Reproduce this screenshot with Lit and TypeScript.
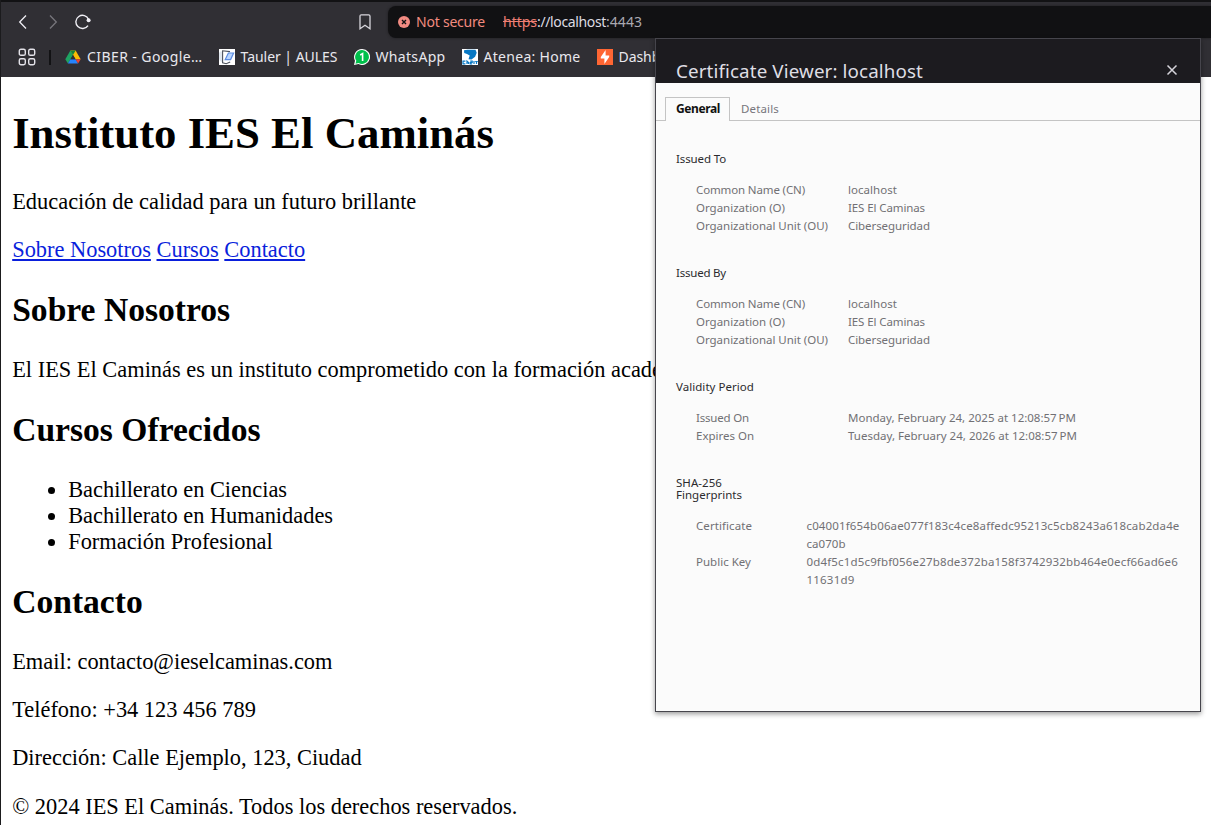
import { LitElement, html, css, svg } from "lit";
import { customElement, property } from "lit/decorators.js";

/** A run of UI text whose tracking is adjusted to fill a given measure. */
@customElement("fit-text")
class FitText extends LitElement {
  @property({ type: Number }) w = 0;
  @property({ type: Boolean, reflect: true }) struck = false;
  static styles = css`
    :host { display: inline-block; white-space: pre; }
    .run { display: inline-block; white-space: pre; }
    :host([struck]) .run { text-decoration: line-through; }
  `;
  render() {
    return html`<span class="run"><slot></slot></span>`;
  }
  firstUpdated() {
    const run = this.renderRoot.querySelector(".run") as HTMLElement;
    const fit = () => {
      run.style.letterSpacing = "0px";
      const n = (this.textContent || "").length;
      const natural = run.getBoundingClientRect().width;
      if (this.w && n) run.style.letterSpacing = `${(this.w - natural) / n}px`;
    };
    fit();
    document.fonts.ready.then(fit);
  }
}

const t = (text: string, w: number, struck = false) => html`<fit-text .w=${w} .struck=${struck}>${text}</fit-text>`;

type Row = [string, number, string, number];
type Section = { title: string; w: number; rows: Row[] };

const subject: Row[] = [
  ["Common Name (CN)", 109, "localhost", 49],
  ["Organization (O)", 89, "IES El Caminas", 77],
  ["Organizational Unit (OU)", 132, "Ciberseguridad", 82],
];
const sections: Section[] = [
  { title: "Issued To", w: 50, rows: subject },
  { title: "Issued By", w: 50, rows: subject },
  {
    title: "Validity Period", w: 78,
    rows: [
      ["Issued On", 53, "Monday, February 24, 2025 at 12:08:57\u202fPM", 228],
      ["Expires On", 58, "Tuesday, February 24, 2026 at 12:08:57\u202fPM", 229],
    ],
  },
];
const prints: [string, number, [string, number][]][] = [
  ["Certificate", 56, [["c04001f654b06ae077f183c4ce8affedc95213c5cb8243a618cab2da4e", 373], ["ca070b", 39]]],
  ["Public Key", 55, [["0d4f5c1d5c9fbf056e27b8de372ba158f3742932bb464e0ecf66ad6e6", 371.5], ["11631d9", 48]]],
];

const drive = svg`<svg width="16" height="16" viewBox="0 0 16 16">
  <path d="M5.4 1.5 8 6 2.9 14.6.3 10.2z" fill="#1ea362"/>
  <path d="M10.6 1.5 15.7 10.2H10.5L5.4 1.5z" fill="#fbbc04"/><path d="M5.4 1.5h5.2L8 6z" fill="#14843b"/>
  <path d="M5.4 10.2h5.2l2.5 4.4H2.9z" fill="#2684fc"/><path d="M10.5 10.2h5.2l-2.6 4.4z" fill="#ea4335"/>
  <path d="M8 6l2.5 4.2H5.5z" fill="#302f34"/></svg>`;
const tauler = svg`<svg width="16" height="16" viewBox="0 0 16 16"><path fill="#fff" d="M0 0h16v16H0z"/>
  <path d="M0 4q2-3 3-1v10q-2 0-3-3z" fill="#dfe6ee"/>
  <path d="M11 2.6 3.6 1.8v12l3.6.9 4-1.6" fill="none" stroke="#4c515c" stroke-width="1.1"/>
  <path d="M9.4 4h5.2l-3 6.6H6.2z" fill="#b9d5ff" stroke="#5b8be0" stroke-width="1.2"/></svg>`;
const whats = svg`<svg width="16" height="16" viewBox="0 0 16 16"><path d="M8 0a8 8 0 1 1-3.6 15.1L0 16l1-4.2A8 8 0 0 1 8 0z" fill="#fff"/>
  <path d="M8 1.1A6.9 6.9 0 1 1 4.6 14l-3.1.7.8-2.9A6.9 6.9 0 0 1 8 1.1z" fill="#00c04b"/><path d="M6.2 6 8.6 4.6V12" fill="none" stroke="#fff" stroke-width="1.6"/></svg>`;
const atenea = svg`<svg width="16" height="16" viewBox="0 0 16 16"><path fill="#fff" d="M0 0h16v16H0z"/>
  <path d="M2 1.2 5.5.8h8l1.2 3-1.6 4-3.6 2.8-3-.3 1.2-3.8L5 5 2.2 4z" fill="#0878c4"/>
  <path d="M3.4 12.2H1v2.6h2.4M5 15v-2.8l1.5 1.4V15M8.2 12.2h2v1.3h-2v1.3h2M12 12v3M13.2 12.5h2.6M14.5 12v3" fill="none" stroke="#0878c4" stroke-width="1.2"/></svg>`;
const burp = svg`<svg width="16" height="16" viewBox="0 0 16 16"><path fill="#ff6633" d="M0 0h16v16H0z"/>
  <path d="M8.6 1v5.4h3.6V8L7.4 15V9.6H3.8V8z" fill="#fff"/></svg>`;

@customElement("app-root")
class AppRoot extends LitElement {
  static styles = css`
    :host { display: block; width: 1211px; height: 825px; overflow: hidden; position: relative; background: #fff; }
    * { box-sizing: border-box; }
    svg { display: block; flex: none; }
    .window { height: 825px; border-left: 1px solid #1b1b1d; overflow: hidden; }
    .chrome { height: 77px; border-top: 2px solid #121214; background: #302f34; color: #e9e8ee; font-family: "Noto Sans", sans-serif; font-size: 14px; }
    .nav { display: flex; height: 36px; align-items: stretch; }
    .tools { display: flex; width: 387px; align-items: center; padding: 4px 15px 0 14px; }
    .tools .fwd { margin-left: 14px; }
    .tools .reload { margin-left: 13px; }
    .tools .mark { margin-left: auto; }
    .address { flex: 1; display: flex; align-items: center; margin-top: 4px; padding: 0 0 1px 10px; background: #111113; border-radius: 8px 0 0 8px; box-shadow: 0 0 3px #0006; }
    .address svg { margin-top: 1px; }
    .warn { color: #f28b7f; margin-left: 6px; }
    .url { display: flex; margin-left: 18px; color: #dddce2; }
    .scheme { color: #ee7f73; }
    .port { color: #aaa9b1; }
    .marks { display: flex; width: 654px; overflow: hidden; height: 39px; align-items: center; padding: 0 0 1px 17px; }
    .sep { width: 2px; height: 15px; background: #121214; margin: 0 14px 0 13px; flex: none; }
    .mk { display: flex; flex: none; align-items: center; gap: 6px; margin-right: 16px; }
    .mk fit-text { margin-top: -2px; }

    .page { padding: 0 11.2px; font: 22.4px "Liberation Serif", serif; color: #000; white-space: nowrap; }
    .page h1 { font-size: 44.8px; margin: 30px 0; }
    .page h2 { font-size: 33.6px; margin: 27.9px 0; }
    .page p { margin: 22.4px 0; }
    .page .lower { margin-top: 27.8px; }
    .page ul { margin: 22.4px 0; padding-left: 56px; }
    .page a { color: #0a1fdc; text-decoration: underline; }

    .dialog { position: absolute; left: 655px; top: 38px; width: 546px; height: 674px; border: 1px solid #46454c; background: #fbfbfb; box-shadow: 0 2px 5px #0006; font-family: "Noto Sans", sans-serif; font-size: 11.5px; color: #2b2b2e; }
    .head { display: flex; height: 44px; justify-content: space-between; padding: 19px 22px 0 20px; background: #1c1b1f; color: #dfdee4; font-size: 18.8px; line-height: 26px; }
    .head svg { margin-top: 6px; }
    .tabs { display: flex; align-items: flex-end; height: 38px; padding-left: 9px; border-bottom: 1px solid #c4c4c4; }
    .tab { height: 24px; width: 65px; margin-bottom: -1px; padding-left: 10px; border: 1px solid #c4c4c4; border-bottom: 0; background: #fbfbfb; color: #111; font-weight: 700; font-size: 12px; line-height: 22px; }
    .other { height: 24px; padding-left: 11px; color: #77767b; line-height: 26px; }
    .body { padding: 32px 20px 0; }
    .section { margin-bottom: 32px; }
    .title { line-height: 12px; margin-bottom: 16px; }
    .row { display: flex; line-height: 18px; height: 18px; padding-left: 20px; color: #717074; }
    .row.tall { height: 36px; }
    .key { width: 152px; }
    .prints .key { width: 110.5px; }
    .val { display: flex; flex-direction: column; align-items: flex-start; }
    .val fit-text, .key fit-text { height: 18px; }
    .section .title div { height: 12px; }
  `;
  mark(icon: unknown, label: string, w: number) {
    return html`<div class="mk">${icon}${t(label, w)}</div>`;
  }
  render() {
    return html`
      <div class="window">
        <div class="chrome">
          <div class="nav">
            <div class="tools">
              <svg width="16" height="16" viewBox="0 0 16 16" fill="none" stroke="#f0eff5" stroke-width="1.3"><path d="M11 1.5 4.7 8l6.3 6.5"/></svg>
              <svg class="fwd" width="16" height="16" viewBox="0 0 16 16" fill="none" stroke="#77767c" stroke-width="1.3"><path d="M5 1.5 11.3 8 5 14.5"/></svg>
              <svg class="reload" width="18" height="16" viewBox="0 0 18 16" fill="none" stroke="#f0eff5" stroke-width="1.4"><path d="M14 11.6A6.6 6.6 0 1 1 14.6 5.4"/><circle cx="14.6" cy="6.2" r="2" fill="#f0eff5" stroke="none"/></svg>
              <svg class="mark" width="16" height="16" viewBox="0 0 16 16" fill="none" stroke="#d7d6dc" stroke-width="1.3"><path d="M3 2.2Q3 .8 4.4.8h7.2Q13 .8 13 2.2v12.5L8 11.2l-5 3.5z"/></svg>
            </div>
            <div class="address">
              <svg width="12" height="12" viewBox="0 0 12 12"><circle cx="6" cy="6" r="6" fill="#f28b82"/><path d="M4 4l4 4M8 4 4 8" stroke="#111113" stroke-width="1.4"/></svg>
              <span class="warn">${t("Not secure", 69)}</span>
              <span class="url"><span class="scheme">${t("https", 34, true)}</span>${t("://localhost", 69)}<span class="port">${t(":4443", 36)}</span></span>
            </div>
          </div>
          <div class="marks">
            <svg width="18" height="18" viewBox="0 0 18 18" fill="none" stroke="#e3e2e8" stroke-width="1.4"><rect x="1.3" y="1.3" width="6" height="6" rx="1.6"/><rect x="10.7" y="1.3" width="6" height="6" rx="1.6"/><rect x="1.3" y="10.7" width="6" height="6" rx="1.6"/><rect x="10.7" y="10.7" width="6" height="6" rx="1.6"/></svg>
            <div class="sep"></div>
            ${this.mark(drive, "CIBER - Google…", 115.5)}
            ${this.mark(tauler, "Tauler | AULES", 97)}
            ${this.mark(whats, "WhatsApp", 70)}
            ${this.mark(atenea, "Atenea: Home", 97)}
            ${this.mark(burp, "Dashboard", 72)}
          </div>
        </div>
        <div class="page">
          <h1>Instituto IES El Caminás</h1>
          <p>Educación de calidad para un futuro brillante</p>
          <div><a>Sobre Nosotros</a> <a>Cursos</a> <a>Contacto</a></div>
          <h2>Sobre Nosotros</h2>
          <p>El IES El Caminás es un instituto comprometido con la formación académica</p>
          <h2>Cursos Ofrecidos</h2>
          <ul>
            <li>Bachillerato en Ciencias</li>
            <li>Bachillerato en Humanidades</li>
            <li>Formación Profesional</li>
          </ul>
          <h2 class="lower">Contacto</h2>
          <p>Email: contacto@ieselcaminas.com</p>
          <p>Teléfono: +34 123 456 789</p>
          <p>Dirección: Calle Ejemplo, 123, Ciudad</p>
          <p>© 2024 IES El Caminás. Todos los derechos reservados.</p>
        </div>
      </div>
      <div class="dialog">
        <div class="head">
          ${t("Certificate Viewer: localhost", 247)}
          <svg width="12" height="12" viewBox="0 0 12 12"><path d="M1.5 1.5l9 9M10.5 1.5l-9 9" stroke="#d5d4da" stroke-width="1.5"/></svg>
        </div>
        <div class="tabs">
          <div class="tab">${t("General", 44)}</div>
          <div class="other">${t("Details", 38)}</div>
        </div>
        <div class="body">
          ${sections.map((s) => html`<div class="section">
            <div class="title">${t(s.title, s.w)}</div>
            ${s.rows.map(([k, kw, v, vw]) => html`<div class="row"><div class="key">${t(k, kw)}</div><div class="val">${t(v, vw)}</div></div>`)}
          </div>`)}
          <div class="section prints">
            <div class="title"><div>${t("SHA-256", 46)}</div><div>${t("Fingerprints", 66)}</div></div>
            ${prints.map(([k, kw, lines]) => html`<div class="row tall"><div class="key">${t(k, kw)}</div><div class="val">${lines.map(([l, w]) => t(l, w))}</div></div>`)}
          </div>
        </div>
      </div>
    `;
  }
}
